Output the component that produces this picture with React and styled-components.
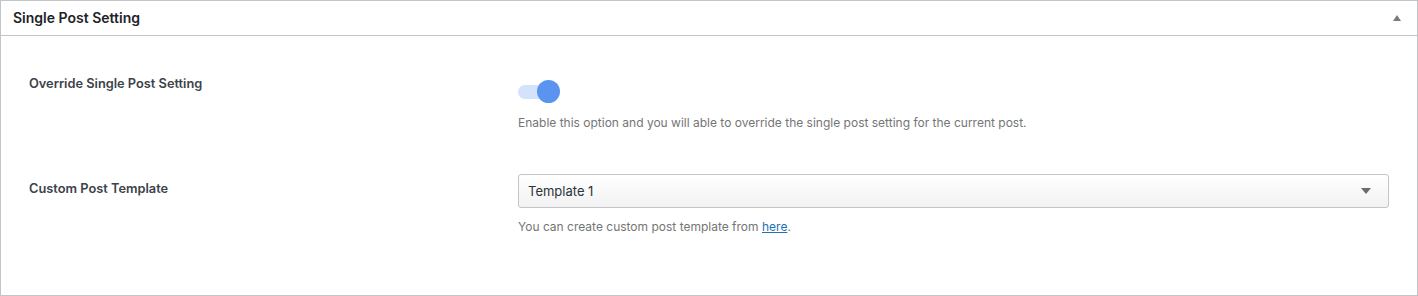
import React from "react";
import styled, { createGlobalStyle } from "styled-components";

const Global = createGlobalStyle`
  html, body { margin: 0; padding: 0; background: #fff; }
  body { font-family: Inter, "Noto Sans", "Liberation Sans", sans-serif; -webkit-font-smoothing: antialiased; }
`;

const Panel = styled.div`
  box-sizing: border-box;
  width: 1418px;
  height: 296px;
  border: 1px solid #c3c4c7;
  background: #fff;
`;

const Header = styled.div`
  box-sizing: border-box;
  height: 35px;
  border-bottom: 1px solid #c3c4c7;
  display: flex;
  align-items: center;
  justify-content: space-between;
  padding: 0 12px 1px 12px;
`;

const Title = styled.h2`
  margin: 0;
  font-size: 14px;
  font-weight: 600;
  color: #1d2327;
  line-height: 18px;
`;

const Caret = styled.span`
  width: 0;
  height: 0;
  border-left: 4px solid transparent;
  border-right: 4px solid transparent;
  border-bottom: 6px solid #787c82;
  margin-right: 4px;
`;

const Body = styled.div`
  padding: 38px 28px 0 28px;
  display: flex;
  flex-direction: column;
  gap: 42px;
`;

const Row = styled.div`
  display: grid;
  grid-template-columns: 489px 1fr;
`;

const Label = styled.div`
  font-size: 12.8px;
  font-weight: 600;
  line-height: 18px;
  color: #3c434a;
  padding-top: ${(p) => p.$offset || 0}px;
`;

const Control = styled.div`
  display: flex;
  flex-direction: column;
  align-items: flex-start;
  padding-top: ${(p) => p.$offset || 0}px;
`;

const Toggle = styled.div`
  position: relative;
  width: 42px;
  height: 23px;
  display: flex;
  align-items: center;
`;

const Track = styled.div`
  width: 34px;
  height: 14px;
  border-radius: 7px;
  background: #d4e2fc;
`;

const Knob = styled.div`
  position: absolute;
  right: 0;
  top: 0;
  width: 23px;
  height: 23px;
  border-radius: 50%;
  background: #5b93f1;
`;

const Desc = styled.p`
  margin: ${(p) => p.$gap}px 0 0 0;
  font-size: 12px;
  line-height: 18px;
  color: #757575;
`;

const Link = styled.a`
  color: #2271b1;
  text-decoration: underline;
`;

const Select = styled.div`
  box-sizing: border-box;
  width: 871px;
  height: 34px;
  border: 1px solid #c3c4c7;
  border-radius: 3px;
  background: linear-gradient(#ffffff, #f2f2f2);
  display: flex;
  align-items: center;
  justify-content: space-between;
  padding: 0 17px 0 9px;
  font-size: 13px;
  color: #2c3338;
`;

const Arrow = styled.span`
  width: 0;
  height: 0;
  border-left: 5px solid transparent;
  border-right: 5px solid transparent;
  border-top: 6px solid #6b6b6b;
`;

export default function App() {
  return (
    <>
      <Global />
      <Panel>
        <Header>
          <Title>Single Post Setting</Title>
          <Caret />
        </Header>
        <Body>
          <Row>
            <Label $offset={1}>Override Single Post Setting</Label>
            <Control $offset={6}>
              <Toggle>
                <Track />
                <Knob />
              </Toggle>
              <Desc $gap={11}>
                Enable this option and you will able to override the single post setting for the current post.
              </Desc>
            </Control>
          </Row>
          <Row>
            <Label $offset={6}>Custom Post Template</Label>
            <Control>
              <Select>
                <span>Template 1</span>
                <Arrow />
              </Select>
              <Desc $gap={10}>
                You can create custom post template from <Link href="#">here</Link>.
              </Desc>
            </Control>
          </Row>
        </Body>
      </Panel>
    </>
  );
}
